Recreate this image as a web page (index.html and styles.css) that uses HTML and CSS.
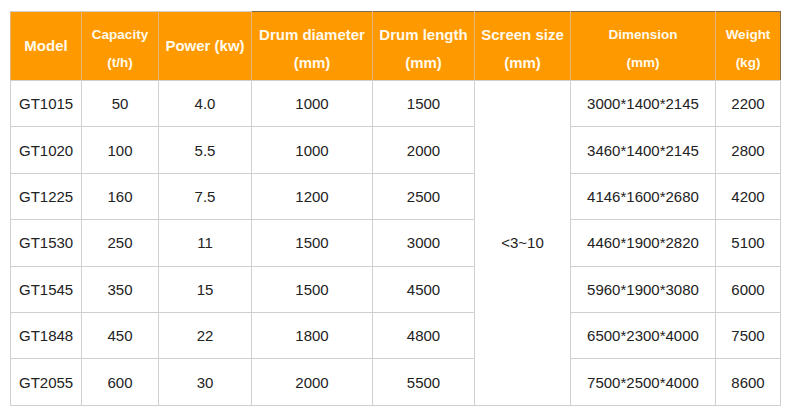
FILE: index.html
```html
<!DOCTYPE html>
<html>
<head>
<meta charset="utf-8">
<link rel="stylesheet" href="styles.css">
</head>
<body>
<table class="spec">
  <colgroup>
    <col class="c-model"><col class="c-cap"><col class="c-pow"><col class="c-dia"><col class="c-len"><col class="c-scr"><col class="c-dim"><col class="c-wt">
  </colgroup>
  <thead>
    <tr>
      <th class="big">Model</th>
      <th class="small two">Capacity<br>(t/h)</th>
      <th class="big">Power (kw)</th>
      <th class="big two dark-top">Drum diameter<br>(mm)</th>
      <th class="big two dark-top">Drum length<br>(mm)</th>
      <th class="big two dark-top">Screen size<br>(mm)</th>
      <th class="small two dark-top">Dimension<br>(mm)</th>
      <th class="small two dark-top last">Weight<br>(kg)</th>
    </tr>
  </thead>
  <tbody>
    <tr><td class="model">GT1015</td><td>50</td><td>4.0</td><td>1000</td><td>1500</td><td rowspan="7">&lt;3~10</td><td>3000*1400*2145</td><td>2200</td></tr>
    <tr><td class="model">GT1020</td><td>100</td><td>5.5</td><td>1000</td><td>2000</td><td>3460*1400*2145</td><td>2800</td></tr>
    <tr><td class="model">GT1225</td><td>160</td><td>7.5</td><td>1200</td><td>2500</td><td>4146*1600*2680</td><td>4200</td></tr>
    <tr><td class="model">GT1530</td><td>250</td><td>11</td><td>1500</td><td>3000</td><td>4460*1900*2820</td><td>5100</td></tr>
    <tr><td class="model">GT1545</td><td>350</td><td>15</td><td>1500</td><td>4500</td><td>5960*1900*3080</td><td>6000</td></tr>
    <tr><td class="model">GT1848</td><td>450</td><td>22</td><td>1800</td><td>4800</td><td>6500*2300*4000</td><td>7500</td></tr>
    <tr><td class="model">GT2055</td><td>600</td><td>30</td><td>2000</td><td>5500</td><td>7500*2500*4000</td><td>8600</td></tr>
  </tbody>
</table>
</body>
</html>
```
FILE: styles.css
```css
html, body {
  margin: 0;
  padding: 0;
  background: #ffffff;
}
body {
  padding: 11px 0 0 10px;
  font-family: "Liberation Sans", Arial, sans-serif;
}
.spec {
  border-collapse: collapse;
  table-layout: fixed;
  width: 770px;
}
.c-model { width: 71px; }
.c-cap { width: 77px; }
.c-pow { width: 93px; }
.c-dia { width: 121px; }
.c-len { width: 102px; }
.c-scr { width: 96px; }
.c-dim { width: 145px; }
.c-wt { width: 65px; }

.spec th {
  background: #ff9900;
  color: #fff9ec;
  font-weight: bold;
  height: 68px;
  padding: 0;
  line-height: 28px;
  border: 1px solid #ebb57a;
  border-top-color: #cfcfcf;
  border-bottom-color: #d0d0d0;
  vertical-align: middle;
  text-align: center;
  white-space: nowrap;
}
.spec th.two {
  padding-top: 5px;
  height: 63px;
}
.spec th.big { font-size: 15px; }
.spec th.small { font-size: 13.5px; }
.spec th.dark-top { border-top-color: #7e6a50; }
.spec th.last { border-right-color: #8a6a42; }

.spec td {
  height: 45.4px;
  padding: 0;
  border: 1px solid #d0d0d0;
  font-size: 15px;
  color: #222;
  text-align: center;
  vertical-align: middle;
}
.spec td.model {
  text-align: left;
  padding-left: 8px;
}
```
